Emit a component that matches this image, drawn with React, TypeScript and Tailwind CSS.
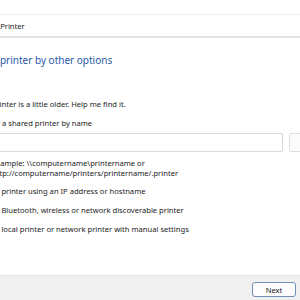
import React from 'react';

const Radio: React.FC<{ label: string }> = ({ label }) => (
  <div className="flex items-center gap-[3px] h-[12px]">
    <span className="w-[7px] h-[7px] rounded-full border border-[#555]" />
    <span>{label}</span>
  </div>
);

const App: React.FC = () => {
  return (
    <div
      className="w-[300px] h-[300px] overflow-hidden bg-white flex flex-col text-[7.6px] leading-[12px] text-[#1b1b1b]"
      style={{ fontFamily: '"Noto Sans", "Open Sans", sans-serif' }}
    >
      {/* window caption */}
      <div className="h-[15px] shrink-0 border-b border-[#efefef]" />

      {/* nav bar */}
      <div className="h-[23px] shrink-0 flex items-center border-b-2 border-[#e3e3e3]">
        <span className="ml-[-16px] whitespace-nowrap">Add Printer</span>
      </div>

      {/* wizard body */}
      <div className="flex flex-col ml-[-31px] whitespace-nowrap">
        <h1 className="mt-[15px] text-[10px] leading-[15px] text-[#1f5aa6] font-normal">
          Find a printer by other options
        </h1>

        <div className="mt-[30px] flex flex-col gap-[7px]">
          <Radio label="My printer is a little older. Help me find it." />
          <Radio label="Select a shared printer by name" />
        </div>

        <div className="ml-[23px] mt-[4px] flex items-center gap-[6px]">
          <div className="w-[291px] h-[19px] shrink-0 border border-[#d9d9d9] rounded-[2px] bg-white" />
          <div className="w-[60px] h-[19px] shrink-0 border border-[#dedede] rounded-[2px] bg-[#fbfbfb]" />
        </div>

        <div className="ml-[23px] mt-[6px] leading-[10px] text-[#222]">
          <div>{'Example: \\\\computername\\printername or'}</div>
          <div>http://computername/printers/printername/.printer</div>
        </div>

        <div className="mt-[7px] flex flex-col gap-[7px]">
          <Radio label="Add a printer using an IP address or hostname" />
          <Radio label="Add a Bluetooth, wireless or network discoverable printer" />
          <Radio label="Add a local printer or network printer with manual settings" />
        </div>
      </div>

      {/* footer */}
      <div className="mt-auto h-[25px] shrink-0 bg-[#f0f0f0] border-t border-[#e6e6e6] flex justify-end items-start pt-[6px] pr-[4px]">
        <button className="w-[44px] h-[15px] bg-[#fdfdfd] border border-[#6f8fb5] rounded-[3px] text-[7.6px] leading-[12px] text-[#1b1b1b]">
          Next
        </button>
      </div>
    </div>
  );
};

export default App;
